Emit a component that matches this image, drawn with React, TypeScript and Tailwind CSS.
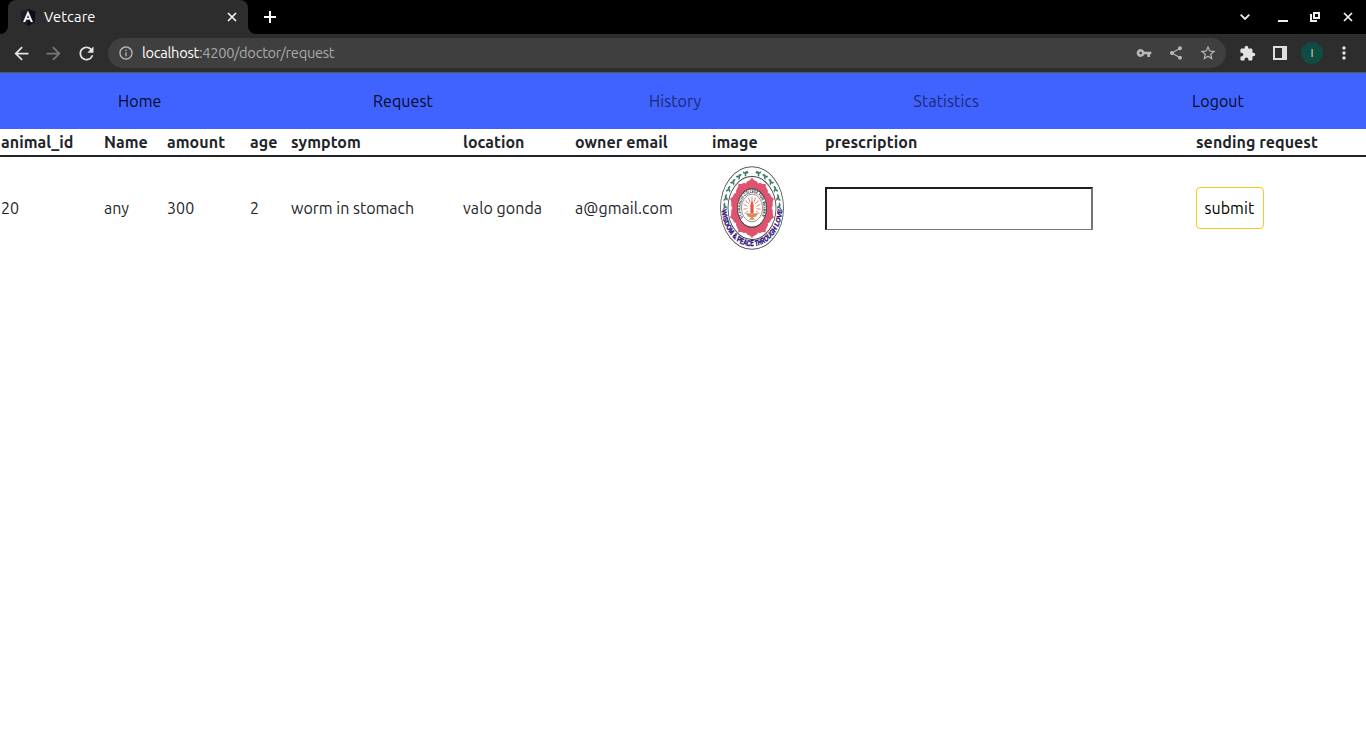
import type { ReactNode } from "react";
import {
  MdArrowBack,
  MdArrowForward,
  MdExtension,
  MdInfoOutline,
  MdKeyboardArrowDown,
  MdMoreVert,
  MdRefresh,
  MdShare,
  MdStarBorder,
  MdVpnKey,
} from "react-icons/md";

function Favicon() {
  return (
    <svg width="16" height="17" viewBox="0 0 16 17" className="shrink-0">
      <path d="M8 0 15.6 2.8 14.4 13.2 8 17 1.6 13.2.4 2.8Z" fill="#1b1b2b" />
      <path d="M8 0 15.6 2.8 14.4 13.2 8 17Z" fill="#0d0d18" />
      <path
        d="M8 1.9 3.2 12.9H5.2L6.1 10.6H9.9L10.8 12.9H12.8ZM8 5.8 9.3 9H6.7Z"
        fill="#fff"
        stroke="#fff"
        strokeWidth="0.3"
        fillRule="evenodd"
      />
    </svg>
  );
}

function Cross({ size, className }: { size: number; className?: string }) {
  return (
    <svg width={size} height={size} viewBox="0 0 10 10" className={className}>
      <path d="M1 1 9 9M9 1 1 9" fill="none" stroke="#f2f2f2" strokeWidth="1.7" />
    </svg>
  );
}

function TabStrip() {
  return (
    <div className="flex h-[34px] items-stretch bg-black text-white">
      <div className="flex w-2 items-end bg-[#2d2d2d]">
        <div className="h-full w-full rounded-br-lg bg-black" />
      </div>
      <div className="flex w-60 items-center rounded-t-lg bg-[#2d2d2d] pl-3 pr-[11px]">
        <Favicon />
        <span className="ml-2 flex-1 text-[14.67px] leading-4 tracking-[0.15px]">Vetcare</span>
        <Cross size={10} />
      </div>
      <div className="w-2 bg-[#2d2d2d]">
        <div className="h-full w-full rounded-bl-lg bg-black" />
      </div>
      <div className="flex items-center pl-2">
        <svg width="12" height="12" viewBox="0 0 12 12">
          <path d="M6 0V12M0 6H12" fill="none" stroke="#fff" strokeWidth="2" />
        </svg>
      </div>
      <div className="ml-auto flex items-center pr-[13px]">
        <svg width="10" height="6" viewBox="0 0 10 6" className="mr-[4px]">
          <path d="M.7.7 5 5 9.3.7" fill="none" stroke="#eee" strokeWidth="1.8" />
        </svg>
        <svg width="10" height="14" viewBox="0 0 10 14" className="ml-[24px]">
          <path d="M0 10h10v2H0z" fill="#eee" />
        </svg>
        <svg width="10" height="10" viewBox="0 0 10 10" className="ml-[22px]">
          <path d="M4 1h5v5H4zM1 2v7h6" fill="none" stroke="#eee" strokeWidth="2" />
        </svg>
        <Cross size={10} className="ml-[23px]" />
      </div>
    </div>
  );
}

function Toolbar() {
  return (
    <div className="flex h-[39px] items-center border-b border-[#565656] bg-[#2d2d2d] text-[#e4e4e4]">
      <MdArrowBack size={21} className="ml-[11px]" />
      <MdArrowForward size={21} className="ml-[11px] text-[#777]" />
      <MdRefresh size={21} className="ml-[12px]" />
      <div className="ml-[11px] flex h-[30px] w-[1118px] items-center rounded-full bg-[#3f3f3f] pl-[10px] pr-[9px] text-[#b8b8b8]">
        <MdInfoOutline size={16} />
        <span className="ml-[8px] flex-1 text-[14.67px] tracking-[-0.3px] text-[#a9a9a9]">
          <span className="text-white">localhost</span>:4200/doctor/request
        </span>
        <MdVpnKey size={16} />
        <MdShare size={16} className="ml-4" />
        <MdStarBorder size={18} className="ml-[15px]" />
      </div>
      <MdExtension size={17} className="ml-[13px]" />
      <svg width="14" height="14" viewBox="0 0 14 14" className="ml-[17px]">
        <path d="M0 0h14v14H0zM2 2v10h7V2z" fill="#dedede" fillRule="evenodd" />
      </svg>
      <div className="ml-[14px] flex size-[22px] items-center justify-center rounded-full bg-[#0f4c41] text-[12px] text-[#dedede]">
        I
      </div>
      <MdMoreVert size={20} className="ml-[11px]" />
    </div>
  );
}

function NavItem({ className, children }: { className: string; children: ReactNode }) {
  return <a className={`shrink-0 ${className}`}>{children}</a>;
}

function Nav() {
  return (
    <nav className="flex h-14 items-center bg-[#4062ff] pl-[118px] text-base tracking-[0.08px] text-black/90">
      <NavItem className="w-[255px]">Home</NavItem>
      <NavItem className="w-[276px]">Request</NavItem>
      <NavItem className="w-[264.6px] text-[#1c2b72]">History</NavItem>
      <NavItem className="w-[278.4px] text-[#1c2b72]">Statistics</NavItem>
      <NavItem className="">Logout</NavItem>
    </nav>
  );
}

const petals = [0, 36, 72, 108, 144, 180, 216, 252, 288, 324];
const leaves = [13, 28, 43, 58, 73, 87];
const rays = [0, 24, 48, 72, 96, 120, 240, 264, 288, 312, 336];

function Emblem() {
  return (
    <svg width="64" height="84" viewBox="0 0 64 84" className="ml-2 block">
      <defs>
        <path id="motto" d="M-30.1 1.5A30.2 30.2 0 0 0 30.1 1.5" />
        <path id="college" d="M-9 7.2A11.5 11.5 0 1 1 9 7.2" />
      </defs>
      <g transform="translate(32 42) scale(1 1.31)">
        <circle r="31.5" fill="#fff" stroke="#555" strokeWidth="0.8" />
        <circle r="24" fill="#fff" stroke="#444" strokeWidth="0.8" />
        {petals.map((a) => (
          <path
            key={a}
            transform={`rotate(${a})`}
            d="M-4.6-13.6C-6.8-16-6.8-19.4-4.4-20.4C-2.8-20.8-1.2-21.2 0-23.2C1.2-21.2 2.8-20.8 4.4-20.4C6.8-19.4 6.8-16 4.6-13.6Z"
            fill="#e0536e"
          />
        ))}
        <circle r="14.6" fill="#fff" stroke="#444" strokeWidth="0.8" />
        <circle r="10.6" fill="#fff" stroke="#666" strokeWidth="0.6" />
        {leaves.map((a) => (
          <g key={a} fill="#3f7f70">
            <g transform={`rotate(${a})`}>
              <path d="M-3-27.4Q-1-29.6 .6-28.2L2.8-29.4Q3.2-27.4 1.2-27L1.8-24.9Q-.6-25-.4-26.8Q-1.6-26.4-3-27.4Z" />
            </g>
            <g transform={`rotate(${-a})`}>
              <path d="M3-27.4Q1-29.6-.6-28.2L-2.8-29.4Q-3.2-27.4-1.2-27L-1.8-24.9Q.6-25 .4-26.8Q1.6-26.4 3-27.4Z" />
            </g>
          </g>
        ))}
        {rays.map((a) => (
          <path key={a} transform={`rotate(${a})`} d="M0-4.5V-8.8" stroke="#e8776c" strokeWidth="0.7" />
        ))}
        <path d="M0-6Q2.2-2.5 1.6 0V4H-1.6V0Q-2.2-2.5 0-6Z" fill="#e2583e" />
        <path d="M-6 4H6Q5 7 1 7L3 9H-3L-1 7Q-5 7-6 4Z" fill="#d98d62" />
        <text
          fontSize="6.4"
          fontWeight="bold"
          fill="#2b0a78"
          stroke="#2b0a78"
          strokeWidth="0.3"
          className="font-['Liberation_Sans_Narrow','Liberation_Sans',sans-serif]"
        >
          <textPath href="#motto" textLength="90" lengthAdjust="spacingAndGlyphs">
            WISDOM &amp; PEACE THROUGH LOVE
          </textPath>
        </text>
        <text
          fontSize="3.8"
          fontWeight="bold"
          fill="#222"
          className="font-['Liberation_Sans_Narrow','Liberation_Sans',sans-serif]"
        >
          <textPath href="#college" textLength="50" lengthAdjust="spacingAndGlyphs">
            ST.FRANCIS COLLEGE FOR WOMEN
          </textPath>
        </text>
      </g>
    </svg>
  );
}

function RequestTable() {
  return (
    <table className="w-[1366px] table-fixed border-collapse text-left text-base tracking-[0.06px] text-[#212529]">
      <colgroup>
        <col className="w-[103px]" />
        <col className="w-[63px]" />
        <col className="w-[83px]" />
        <col className="w-[41px]" />
        <col className="w-[172px]" />
        <col className="w-[112px]" />
        <col className="w-[137px]" />
        <col className="w-[113px]" />
        <col className="w-[371px]" />
        <col className="w-[171px]" />
      </colgroup>
      <thead>
        <tr className="h-[27px] border-b-2 border-[#212529] whitespace-nowrap leading-6 *:px-px *:py-0 *:font-bold">
          <th>animal_id</th>
          <th>Name</th>
          <th>amount</th>
          <th>age</th>
          <th>symptom</th>
          <th>location</th>
          <th>owner email</th>
          <th>image</th>
          <th>prescription</th>
          <th>sending request</th>
        </tr>
      </thead>
      <tbody>
        <tr className="h-[102px] whitespace-nowrap *:px-px *:py-0">
          <td>20</td>
          <td>any</td>
          <td>300</td>
          <td>2</td>
          <td className="tracking-normal">worm in stomach</td>
          <td>valo gonda</td>
          <td>a@gmail.com</td>
          <td>
            <Emblem />
          </td>
          <td>
            <input
              type="text"
              aria-label="prescription"
              className="mt-px block h-[43px] w-[268px] border-2 border-b border-t-[#1e1e1e] border-r-[#767676] border-b-[#767676] border-l-[#1e1e1e] px-2"
            />
          </td>
          <td>
            <button className="flex h-[42px] w-[68px] items-center rounded-[4px] border border-[#fcc42c] pl-[7.5px] text-black">
              submit
            </button>
          </td>
        </tr>
      </tbody>
    </table>
  );
}

export default function App() {
  return (
    <div className="flex h-[741px] w-[1366px] flex-col overflow-hidden bg-white font-[Ubuntu,'Noto_Sans',sans-serif]">
      <TabStrip />
      <Toolbar />
      <Nav />
      <main>
        <RequestTable />
      </main>
    </div>
  );
}
